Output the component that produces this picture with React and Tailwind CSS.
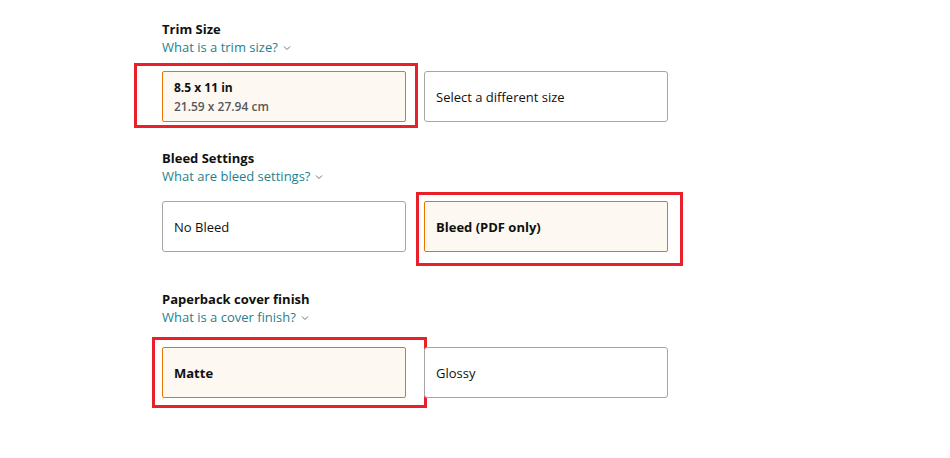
import React from 'react';

function Chevron() {
  return (
    <svg width="8" height="6" viewBox="0 0 8 6" className="ml-[5px] mt-[1px] inline-block">
      <polyline points="1,1.5 4,4.5 7,1.5" fill="none" stroke="#6f7373" strokeWidth="1" />
    </svg>
  );
}

function Heading({ title, link }) {
  return (
    <div>
      <div className="text-[13px] leading-[17px] font-bold text-[#0f1111]">{title}</div>
      <div className="flex items-center text-[13px] leading-[18px] text-[#1f7f8f]">
        {link}
        <Chevron />
      </div>
    </div>
  );
}

function Option({ selected, children, mark }) {
  return (
    <div
      className={
        selected
          ? 'relative w-[244px] h-[51px] rounded-[2px] border border-[#e77600] bg-[#fef8f2] px-[11px] flex flex-col justify-center'
          : 'relative w-[244px] h-[51px] rounded-[3px] border border-[#a6a6a6] bg-white px-[11px] flex flex-col justify-center'
      }
    >
      {children}
      {mark}
    </div>
  );
}

export default function App() {
  return (
    <div
      className="w-[950px] h-[458px] bg-white pl-[162px] pt-[21px]"
      style={{ fontFamily: '"Open Sans", "Noto Sans", sans-serif' }}
    >
      <Heading title="Trim Size" link="What is a trim size?" />
      <div className="flex gap-[18px] mt-[15px]">
        <Option
          selected
          mark={<div className="absolute left-[-29px] right-[-13px] top-[-9px] bottom-[-7px] border-[3px] border-[#e8202a]" />}
        >
          <div className="text-[12px] leading-[19px] font-bold text-[#0f1111]">8.5 x 11 in</div>
          <div className="text-[12px] leading-[19px] font-semibold text-[#565959]">21.59 x 27.94 cm</div>
        </Option>
        <Option>
          <div className="text-[13px] leading-[18px] text-[#0f1111]">Select a different size</div>
        </Option>
      </div>

      <div className="mt-[28px]">
        <Heading title="Bleed Settings" link="What are bleed settings?" />
      </div>
      <div className="flex gap-[18px] mt-[16px]">
        <Option>
          <div className="text-[13px] leading-[18px] text-[#0f1111]">No Bleed</div>
        </Option>
        <Option
          selected
          mark={<div className="absolute left-[-9px] right-[-16px] top-[-10px] bottom-[-15px] border-[3px] border-[#e8202a]" />}
        >
          <div className="text-[13px] leading-[18px] font-bold text-[#0f1111]">Bleed (PDF only)</div>
        </Option>
      </div>

      <div className="mt-[39px]">
        <Heading title="Paperback cover finish" link="What is a cover finish?" />
      </div>
      <div className="flex gap-[18px] mt-[21px]">
        <Option
          selected
          mark={<div className="absolute left-[-11px] right-[-22px] top-[-11px] bottom-[-11px] border-[3px] border-[#e8202a]" />}
        >
          <div className="text-[13px] leading-[18px] font-bold text-[#0f1111]">Matte</div>
        </Option>
        <Option>
          <div className="text-[13px] leading-[18px] text-[#0f1111]">Glossy</div>
        </Option>
      </div>
    </div>
  );
}
